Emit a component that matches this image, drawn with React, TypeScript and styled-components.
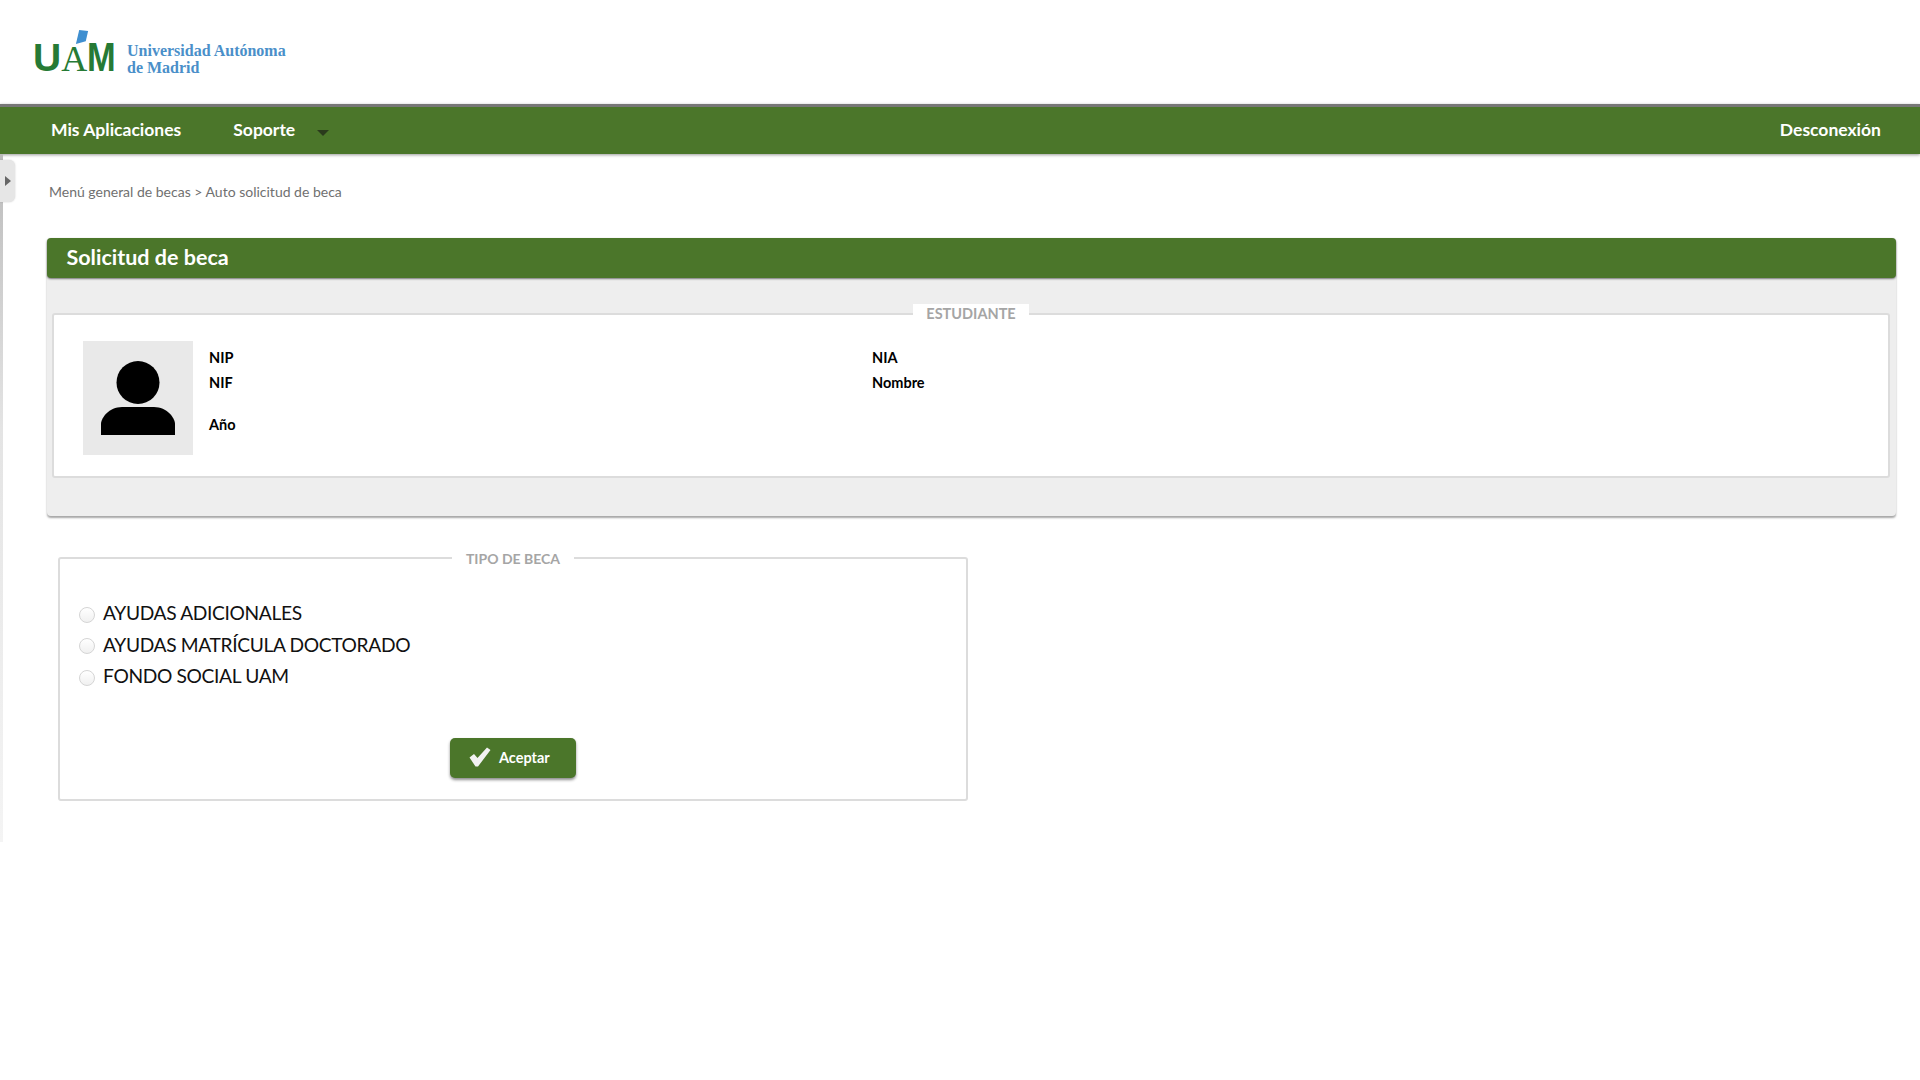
import React from 'react'
import styled, { createGlobalStyle } from 'styled-components'

const GlobalStyle = createGlobalStyle`
  html, body {
    margin: 0;
    padding: 0;
    background: #fff;
    font-family: 'Lato', 'Noto Sans', sans-serif;
  }
  * { box-sizing: border-box; }
`

const App: React.FC = () => (
  <>
    <GlobalStyle />
    <Header>
      <Logo>
        <LogoMark>
          <Kite viewBox="0 0 14 16">
            <polygon points="4,0 13.5,1 11,12 0.5,15" fill="#3f8fd0" />
          </Kite>
          <LogoU>U</LogoU>
          <LogoSerif>A</LogoSerif>
          <LogoM>M</LogoM>
        </LogoMark>
        <LogoText>
          Universidad Autónoma
          <br />
          de Madrid
        </LogoText>
      </Logo>
    </Header>
    <NavBar>
      <NavLeft>
        <NavLink>Mis Aplicaciones</NavLink>
        <NavLink>Soporte</NavLink>
        <Caret />
      </NavLeft>
      <NavLink>Desconexión</NavLink>
    </NavBar>
    <Body>
      <SideStrip>
        <SideTab>
          <SideArrow />
        </SideTab>
      </SideStrip>
      <Main>
        <Breadcrumb>Menú general de becas &gt; Auto solicitud de beca</Breadcrumb>
        <Panel>
          <PanelTitle>Solicitud de beca</PanelTitle>
          <PanelBody>
            <StudentBox>
              <StudentLegend>ESTUDIANTE</StudentLegend>
              <Photo>
                <svg width="74" height="74" viewBox="0 0 74 74">
                  <circle cx="37" cy="21.5" r="21.5" fill="#000" />
                  <path d="M0 74V63C0 57 8 46 21 46H53C66 46 74 57 74 63V74Z" fill="#000" />
                </svg>
              </Photo>
              <InfoGrid>
                <InfoLabel>NIP</InfoLabel>
                <InfoLabel>NIA</InfoLabel>
                <InfoLabel>NIF</InfoLabel>
                <InfoLabel>Nombre</InfoLabel>
                <YearLabel>Año</YearLabel>
              </InfoGrid>
            </StudentBox>
          </PanelBody>
        </Panel>
        <TypeBox>
          <TypeLegend>TIPO DE BECA</TypeLegend>
          <RadioList>
            {['AYUDAS ADICIONALES', 'AYUDAS MATRÍCULA DOCTORADO', 'FONDO SOCIAL UAM'].map((option) => (
              <RadioRow key={option}>
                <Radio type="radio" name="tipo" />
                {option}
              </RadioRow>
            ))}
          </RadioList>
          <AcceptButton type="button">
            <svg width="22" height="20" viewBox="0 0 22 20">
              <path d="M0.5 10.5L5 7L8.5 11L18 0.5L21.5 3L9 19.5H6.5Z" fill="#f2f2f2" />
            </svg>
            Aceptar
          </AcceptButton>
        </TypeBox>
      </Main>
    </Body>
  </>
)

export default App

const Header = styled.header`
  height: 104px;
  padding: 30px 0 0 33px;
`
const Logo = styled.div`
  display: flex;
  align-items: flex-start;
  gap: 12px;
`
const LogoMark = styled.div`
  position: relative;
  display: flex;
  align-items: baseline;
  height: 46px;
  padding-top: 9px;
  width: 82px;
  color: #267a35;
  line-height: 36px;
`
const Kite = styled.svg`
  position: absolute;
  left: 42px;
  top: 0;
  width: 14px;
  height: 15px;
`
const LogoU = styled.span`
  font-family: 'Liberation Sans', sans-serif;
  font-weight: 700;
  font-size: 39px;
`
const LogoM = styled(LogoU)`
  display: inline-block;
  font-size: 40px;
  transform: scaleX(0.86);
  transform-origin: left;
`
const LogoSerif = styled.span`
  font-family: 'Liberation Serif', serif;
  font-size: 36px;
`
const LogoText = styled.div`
  margin-top: 12px;
  font-family: 'Liberation Serif', serif;
  font-weight: 700;
  font-size: 16px;
  line-height: 17px;
  color: #4a8fc9;
`
const NavBar = styled.nav`
  height: 50px;
  padding: 0 39px 2px 51px;
  display: flex;
  align-items: center;
  justify-content: space-between;
  background: #4b762a;
  border-top: 3px solid #777;
  box-shadow: 0 1px 3px rgba(0, 0, 0, 0.4);
  position: relative;
`
const NavLeft = styled.div`
  display: flex;
  align-items: center;
  gap: 52px;
`
const NavLink = styled.a`
  color: #fff;
  font-weight: 700;
  font-size: 17.5px;
`
const Caret = styled.span`
  width: 0;
  height: 0;
  margin: 6px 0 0 -30px;
  border-left: 6.5px solid transparent;
  border-right: 6.5px solid transparent;
  border-top: 6px solid #2a3a1c;
`
const Body = styled.div`
  display: flex;
  align-items: flex-start;
`
const SideStrip = styled.aside`
  position: relative;
  flex: none;
  width: 3px;
  height: 688px;
  background: linear-gradient(#bbb, #e4e4e4 40%, #f4f4f4);
`
const SideTab = styled.div`
  position: absolute;
  left: 0;
  top: 6px;
  width: 15px;
  height: 42px;
  display: flex;
  align-items: center;
  justify-content: center;
  background: #e6e6e6;
  border-radius: 0 6px 6px 0;
  box-shadow: 0 0 2px rgba(0, 0, 0, 0.2);
`
const SideArrow = styled.span`
  width: 0;
  height: 0;
  border-top: 5px solid transparent;
  border-bottom: 5px solid transparent;
  border-left: 6px solid #666;
`
const Main = styled.main`
  flex: 1;
  padding: 29px 24px 0 44px;
`
const Breadcrumb = styled.div`
  margin-left: 2px;
  height: 55px;
  font-size: 14px;
  line-height: 18px;
  color: #707070;
`
const Panel = styled.section`
  border-radius: 4px;
  background: #eee;
  box-shadow: 0 2px 2px rgba(0, 0, 0, 0.35);
`
const PanelTitle = styled.h2`
  margin: 0;
  height: 40px;
  padding: 0 19.5px;
  font-size: 21.5px;
  font-weight: 700;
  line-height: 38px;
  color: #fff;
  background: #4b762a;
  border-radius: 4px;
  box-shadow: 0 1px 2px rgba(0, 0, 0, 0.5);
`
const PanelBody = styled.div`
  padding: 35px 6px 38px 5px;
`
const StudentBox = styled.div`
  position: relative;
  display: flex;
  gap: 16px;
  height: 165px;
  padding: 26px 29px;
  background: #fff;
  border: 2px solid #dcdcdc;
  border-radius: 3px;
`
const StudentLegend = styled.div`
  position: absolute;
  top: -11px;
  left: 859px;
  width: 116px;
  height: 20px;
  font-size: 14.5px;
  font-weight: 700;
  line-height: 20px;
  text-align: center;
  color: #a5a5a5;
  background: #fff;
`
const Photo = styled.div`
  flex: none;
  width: 110px;
  height: 114px;
  display: flex;
  align-items: center;
  justify-content: center;
  background: #e9e9e9;
`
const InfoGrid = styled.div`
  display: grid;
  grid-template-columns: 663px 1fr;
  grid-auto-rows: 25px;
  padding-top: 4px;
`
const InfoLabel = styled.div`
  font-size: 14.5px;
  font-weight: 700;
  line-height: 25px;
  color: #000;
`
const YearLabel = styled(InfoLabel)`
  grid-column: 1;
  margin-top: 17px;
`
const TypeBox = styled.section`
  position: relative;
  width: 910px;
  height: 244px;
  margin: 41px 0 0 11px;
  padding: 38px 20px 0;
  border: 2px solid #dcdcdc;
  border-radius: 3px;
`
const TypeLegend = styled.div`
  position: absolute;
  top: -10px;
  left: 392px;
  width: 122px;
  height: 20px;
  font-size: 14px;
  font-weight: 700;
  line-height: 20px;
  text-align: center;
  color: #a5a5a5;
  background: #fff;
`
const RadioList = styled.div`
  display: flex;
  flex-direction: column;
`
const RadioRow = styled.label`
  display: flex;
  align-items: center;
  height: 31.5px;
  gap: 8px;
  font-size: 19.2px;
  letter-spacing: -0.35px;
  color: #111;
`
const Radio = styled.input`
  appearance: none;
  flex: none;
  width: 16px;
  height: 16px;
  margin: 4px 0 0 -1px;
  border: 1px solid #d5d5d5;
  border-radius: 50%;
  background: linear-gradient(#fff, #f0f0f0);
`
const AcceptButton = styled.button`
  position: absolute;
  left: 390px;
  top: 179px;
  width: 126px;
  height: 40px;
  padding: 0 0 2px 19px;
  display: flex;
  align-items: center;
  gap: 8px;
  border: none;
  border-radius: 5px;
  font-family: inherit;
  font-size: 14.5px;
  font-weight: 700;
  color: #fff;
  background: #4b762a;
  box-shadow: 0 2px 3px rgba(0, 0, 0, 0.45);
`
